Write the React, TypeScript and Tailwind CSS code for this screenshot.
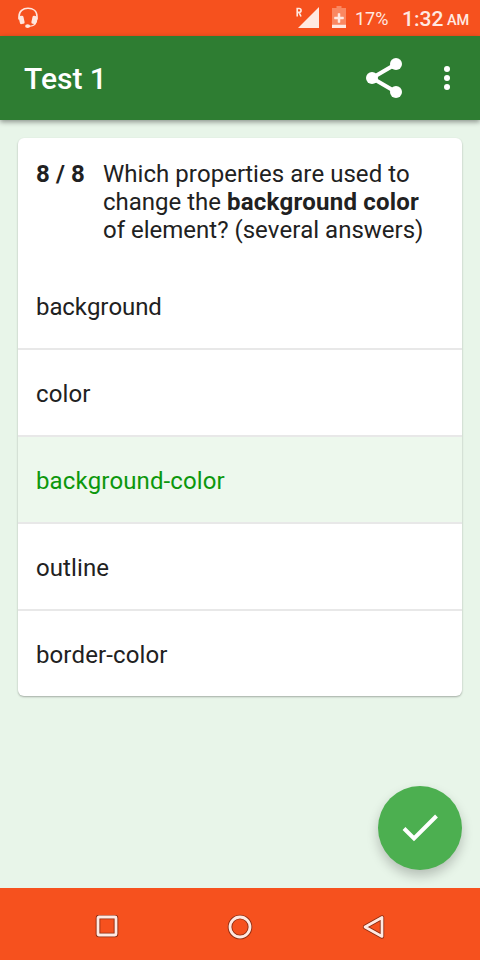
import React from "react";

const answers: { label: string; selected?: boolean }[] = [
  { label: "background" },
  { label: "color" },
  { label: "background-color", selected: true },
  { label: "outline" },
  { label: "border-color" },
];

function HeadsetIcon() {
  return (
    <svg width="20" height="22" viewBox="0 0 20 22" className="ml-[17.5px]" fill="none">
      <path d="M1 12.500V9.500C1 4 5 1.300 10 1.300s9 2.700 9 8.200v3" stroke="#ffe6de" strokeWidth="1.600" />
      <path d="M18.900 11.500c0 5-2.600 7.700-7.900 7.900" stroke="#ffe6de" strokeWidth="1.100" />
      <rect x="1.300" y="8.800" width="4.800" height="8.200" rx="1.500" transform="rotate(-13 3.700 13)" fill="#ffe6de" />
      <rect x="13.900" y="8.800" width="4.800" height="8.200" rx="1.500" transform="rotate(13 16.200 13)" fill="#ffe6de" />
      <ellipse cx="9.600" cy="19.100" rx="2.500" ry="1.900" fill="#ffe6de" />
    </svg>
  );
}

function StatusBar() {
  return (
    <div className="flex h-9 shrink-0 items-center justify-between bg-[#f6511e] text-[#ffe9e2]">
      <HeadsetIcon />
      <div className="flex h-9 items-start">
        <svg width="24" height="24" viewBox="0 0 24 24" className="mt-[5px]">
          <path d="M23 2v21H2z" fill="#ffe9e2" />
          <path d="M1.200 11.500V3.500h1.900a1.900 1.900 0 0 1 0 3.900H1.200M3 7.400l2 4.100" fill="none" stroke="#ffe9e2" strokeWidth="1.600" />
        </svg>
        <svg width="14" height="22" viewBox="0 0 14 22" className="ml-3 mt-1.5">
          <path d="M4.500 0h5v2H14v16H0V2h4.500z" fill="#fa8862" />
          <path d="M0 18.500h14V22H0z" fill="#ffe9e2" />
          <path d="M6 7.500h2V11h3.500v2H8v3.500H6V13H2.500v-2H6z" fill="#ffe9e2" stroke="#ffe9e2" strokeWidth=".5" />
        </svg>
        <span className="ml-[9px] mt-[9px] w-[47px] text-[18px] leading-5">17%</span>
        <span className="mt-[7px] w-[45px] text-[21px] leading-6 font-medium">1:32</span>
        <span className="mr-[11px] mt-[11px] w-[22px] text-[14.500px] leading-5 font-medium">AM</span>
      </div>
    </div>
  );
}

function Toolbar() {
  return (
    <header className="relative flex h-[84px] shrink-0 items-center bg-[#2e7d32] pl-6 text-white shadow-[0_2px_5px_rgba(0,0,0,0.4)]">
      <h1 className="grow pt-0.5 text-[30px] leading-9 font-medium">Test 1</h1>
      <svg width="36" height="40" viewBox="0 0 36 40" fill="white" className="mr-[41px]">
        <path d="M30 6 6 20l24 14" fill="none" stroke="white" strokeWidth="4" />
        <circle cx="30" cy="6" r="6" />
        <circle cx="6" cy="20" r="6" />
        <circle cx="30" cy="34" r="6" />
      </svg>
      <svg width="8" height="24" viewBox="0 0 8 24" fill="white" className="mr-[29px]">
        <circle cx="4" cy="3" r="3" />
        <circle cx="4" cy="12" r="3" />
        <circle cx="4" cy="21" r="3" />
      </svg>
    </header>
  );
}

function QuestionCard() {
  return (
    <section className="mx-[18px] mt-[18px] h-[558px] overflow-hidden rounded-md bg-white text-[24px] leading-7 text-[#212121] shadow-[0_1px_2px_rgba(0,0,0,0.3)] [font-kerning:none]">
      <div className="flex h-[125px] pl-[18px] pt-[22px]">
        <b className="w-[67px] shrink-0 font-bold tracking-[0.1px]">8 / 8</b>
        <p className="whitespace-nowrap">
          <span className="tracking-[0.04px]">Which properties are used to</span>
          <br />
          change the <b className="font-bold tracking-[0.2px]">background color</b>
          <br />
          of element? (several answers)
        </p>
      </div>
      <ul>
        {answers.map((a, i) => (
          <li
            key={a.label}
            className={`flex items-center pl-[18px] pt-0.5 ${
              i === 0 ? "tracking-[-0.08px]" : "tracking-[0.1px]"
            } ${
              i === answers.length - 1 ? "h-[85px]" : "h-[87px] border-b-2 border-[#e8e8e8]"
            } ${a.selected ? "bg-[#edf8ed] text-[#0c970c]" : ""}`}
          >
            {a.label}
          </li>
        ))}
      </ul>
    </section>
  );
}

function NavigationBar() {
  return (
    <nav className="relative flex h-[72px] shrink-0 items-center bg-[#f6511e] pt-[5px]">
      <svg width="24" height="24" viewBox="0 0 24 24" fill="none" className="ml-[95px]">
        <rect x="3" y="2" width="18" height="18" rx="1" stroke="#8d2d12" strokeWidth="4.600" strokeLinejoin="round" />
        <rect x="3" y="2" width="18" height="18" rx="1" stroke="#ffe9e2" strokeWidth="2.800" />
      </svg>
      <svg width="26" height="26" viewBox="0 0 26 26" fill="none" className="ml-[108px]">
        <circle cx="13" cy="13" r="10" stroke="#8d2d12" strokeWidth="4.600" />
        <circle cx="13" cy="13" r="10" stroke="#ffe9e2" strokeWidth="2.800" />
      </svg>
      <svg width="26" height="26" viewBox="0 0 26 26" fill="none" className="ml-[108px]">
        <path d="M21 3.500v19L4 13z" stroke="#8d2d12" strokeWidth="4.400" strokeLinejoin="round" />
        <path d="M21 3.500v19L4 13z" stroke="#ffe9e2" strokeWidth="2.700" strokeLinejoin="round" />
      </svg>
    </nav>
  );
}

export default function App() {
  return (
    <div className="relative flex h-[960px] w-[480px] flex-col overflow-hidden bg-[#e8f5e9] font-[Roboto,sans-serif]">
      <StatusBar />
      <Toolbar />
      <main className="grow">
        <QuestionCard />
      </main>
      <button
        aria-label="Submit answers"
        className="absolute bottom-[90px] right-[18px] flex size-[84px] items-center justify-center rounded-full bg-[#4caf50] shadow-[0_6px_12px_rgba(0,0,0,0.22)]"
      >
        <svg width="36" height="28" viewBox="0 0 36 28" fill="none">
          <path d="M2 14.500 12 24.500 34.500 2" stroke="white" strokeWidth="4" />
        </svg>
      </button>
      <NavigationBar />
    </div>
  );
}
